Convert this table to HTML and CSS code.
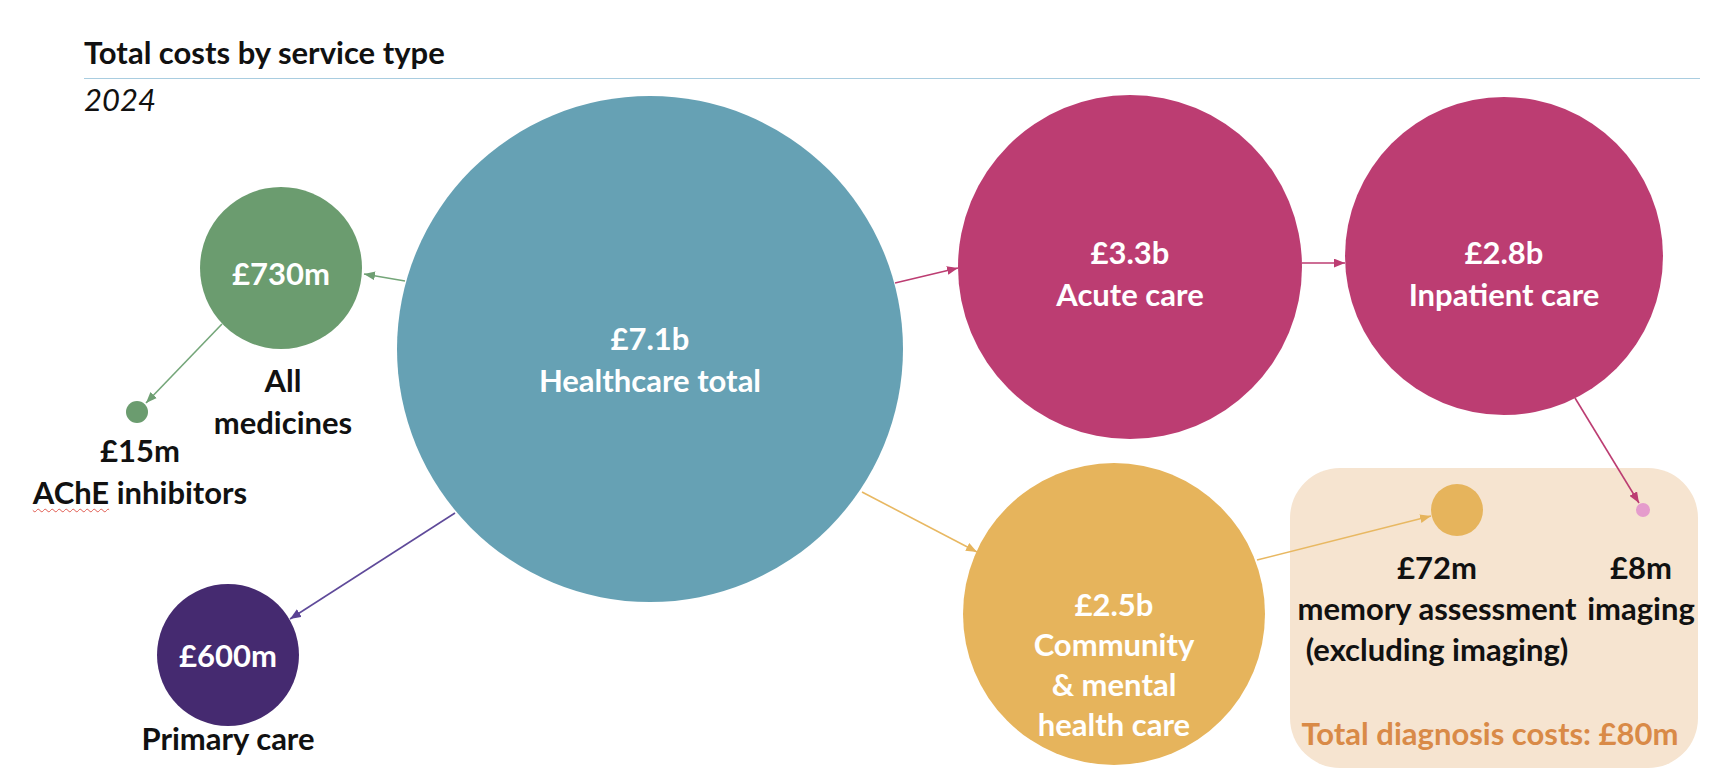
FILE: index.html
```html
<!DOCTYPE html>
<html lang="en">
<head>
<meta charset="utf-8">
<title>Total costs by service type</title>
<link rel="stylesheet" href="styles.css">
</head>
<body>
<div class="slide">
  <header class="header">
    <h1 class="title">Total costs by service type</h1>
    <p class="subtitle">2024</p>
  </header>

  <div class="diagram">
    <div class="box"></div>

    <svg class="links" width="1730" height="782" viewBox="0 0 1730 782" aria-hidden="true">
      <defs>
        <marker id="ah-green" viewBox="0 0 10 8" refX="10" refY="4" markerUnits="userSpaceOnUse" markerWidth="11" markerHeight="9" orient="auto"><path d="M0,0 L10,4 L0,8 z" fill="#6f9f73"/></marker>
        <marker id="ah-purple" viewBox="0 0 10 8" refX="10" refY="4" markerUnits="userSpaceOnUse" markerWidth="11" markerHeight="9" orient="auto"><path d="M0,0 L10,4 L0,8 z" fill="#5a4294"/></marker>
        <marker id="ah-pink" viewBox="0 0 10 8" refX="10" refY="4" markerUnits="userSpaceOnUse" markerWidth="11" markerHeight="9" orient="auto"><path d="M0,0 L10,4 L0,8 z" fill="#bc3d72"/></marker>
        <marker id="ah-yellow" viewBox="0 0 10 8" refX="10" refY="4" markerUnits="userSpaceOnUse" markerWidth="11" markerHeight="9" orient="auto"><path d="M0,0 L10,4 L0,8 z" fill="#e6b45c"/></marker>
      </defs>
      <line class="ln green" x1="405" y1="281" x2="364" y2="274" marker-end="url(#ah-green)"/>
      <line class="ln green" x1="222" y1="324" x2="146" y2="403" marker-end="url(#ah-green)"/>
      <line class="ln purple" x1="455" y1="513" x2="290" y2="619" marker-end="url(#ah-purple)"/>
      <line class="ln pink" x1="895" y1="283" x2="958" y2="268" marker-end="url(#ah-pink)"/>
      <line class="ln pink" x1="1302" y1="263" x2="1345" y2="263" marker-end="url(#ah-pink)"/>
      <line class="ln pink" x1="1575" y1="398" x2="1639" y2="503" marker-end="url(#ah-pink)"/>
      <line class="ln yellow" x1="862" y1="492" x2="977" y2="552" marker-end="url(#ah-yellow)"/>
      <line class="ln yellow" x1="1257" y1="560" x2="1431" y2="516" marker-end="url(#ah-yellow)"/>
    </svg>

    <div class="node n-medicines"><span>£730m</span></div>
    <div class="node n-ache"></div>
    <div class="node n-total"><span>£7.1b</span><span>Healthcare total</span></div>
    <div class="node n-acute"><span>£3.3b</span><span>Acute care</span></div>
    <div class="node n-inpatient"><span>£2.8b</span><span>Inpatient care</span></div>
    <div class="node n-community"><span>£2.5b</span><span>Community</span><span>&amp; mental</span><span>health care</span></div>
    <div class="node n-primary"><span>£600m</span></div>
    <div class="node n-memory"></div>
    <div class="node n-imaging"></div>

    <div class="label l-medicines">All<br>medicines</div>
    <div class="label l-ache">£15m<br><span class="spell">AChE</span> inhibitors</div>
    <div class="label l-primary">Primary care</div>
    <div class="label l-memory">£72m<br>memory assessment<br>(excluding imaging)</div>
    <div class="label l-imaging">£8m<br>imaging</div>
    <div class="label l-diagnosis">Total diagnosis costs: £80m</div>
  </div>
</div>
</body>
</html>
```

FILE: styles.css
```css
* { box-sizing: border-box; }

html, body {
  margin: 0;
  padding: 0;
  background: #ffffff;
}

body {
  font-family: "Lato", "Open Sans", "Liberation Sans", sans-serif;
  color: #111111;
}

.slide {
  position: relative;
  width: 1730px;
  height: 782px;
  overflow: hidden;
  background: #ffffff;
}

/* ---------- header ---------- */
.header {
  margin-left: 84px;
  width: 1616px;
  padding-top: 34px;
}

.title {
  margin: 0;
  font-size: 31px;
  line-height: 37px;
  font-weight: 700;
  color: #111111;
  padding-bottom: 7px;
  border-bottom: 1.5px solid #a9cde0;
}

.subtitle {
  margin: 2px 0 0;
  font-size: 31px;
  line-height: 37px;
  font-style: italic;
  font-weight: 400;
  color: #111111;
}

/* ---------- diagram canvas ---------- */
.diagram {
  position: absolute;
  inset: 0;
}

.links {
  position: absolute;
  left: 0;
  top: 0;
  z-index: 1;
}

.ln { stroke-width: 1.6; fill: none; }
.ln.green { stroke: #74a679; }
.ln.purple { stroke: #5f4a9a; }
.ln.pink { stroke: #bc3d72; }
.ln.yellow { stroke: #e8b862; }

.box {
  position: absolute;
  left: 1290px;
  top: 468px;
  width: 408px;
  height: 300px;
  border-radius: 50px;
  background: #f6e4d0;
  z-index: 0;
}

.node {
  position: absolute;
  z-index: 2;
  border-radius: 50%;
  display: flex;
  flex-direction: column;
  align-items: center;
  justify-content: center;
  color: #ffffff;
  font-size: 31px;
  font-weight: 700;
  line-height: 42px;
  text-align: center;
  white-space: nowrap;
}

.n-medicines { left: 200px; top: 187px; width: 162px; height: 162px; background: #6b9c6f; padding-top: 10px; }
.n-ache      { left: 126px; top: 401px; width: 22px;  height: 22px;  background: #6b9c6f; }
.n-total     { left: 397px; top: 96px;  width: 506px; height: 506px; background: #66a1b4; padding-top: 20px; }
.n-acute     { left: 958px; top: 95px;  width: 344px; height: 344px; background: #bc3d72; padding-top: 12px; }
.n-inpatient { left: 1345px; top: 97px; width: 318px; height: 318px; background: #bc3d72; padding-top: 34px; }
.n-community { left: 963px; top: 463px; width: 302px; height: 302px; background: #e6b45c; padding-top: 100px; line-height: 40px; }
.n-primary   { left: 157px; top: 584px; width: 142px; height: 142px; background: #452a70; }
.n-memory    { left: 1431px; top: 484px; width: 52px; height: 52px; background: #e6b45c; }
.n-imaging   { left: 1636px; top: 503px; width: 14px; height: 14px; background: #e59ccc; }

.label {
  position: absolute;
  z-index: 3;
  font-size: 31px;
  font-weight: 700;
  line-height: 42px;
  text-align: center;
  color: #111111;
  white-space: nowrap;
}

.l-medicines { left: 183px;  top: 359px; width: 200px; }
.l-ache      { left: 20px;   top: 429px; width: 240px; }
.l-primary   { left: 108px;  top: 717px; width: 240px; }
.l-memory    { left: 1287px; top: 547px; width: 300px; line-height: 41px; }
.l-imaging   { left: 1581px; top: 547px; width: 120px; line-height: 41px; }
.l-diagnosis { left: 1290px; top: 712px; width: 400px; color: #d98a47; }

.spell {
  text-decoration: underline wavy #e05a50;
  text-decoration-thickness: 1px;
  text-underline-offset: 4px;
}
```
